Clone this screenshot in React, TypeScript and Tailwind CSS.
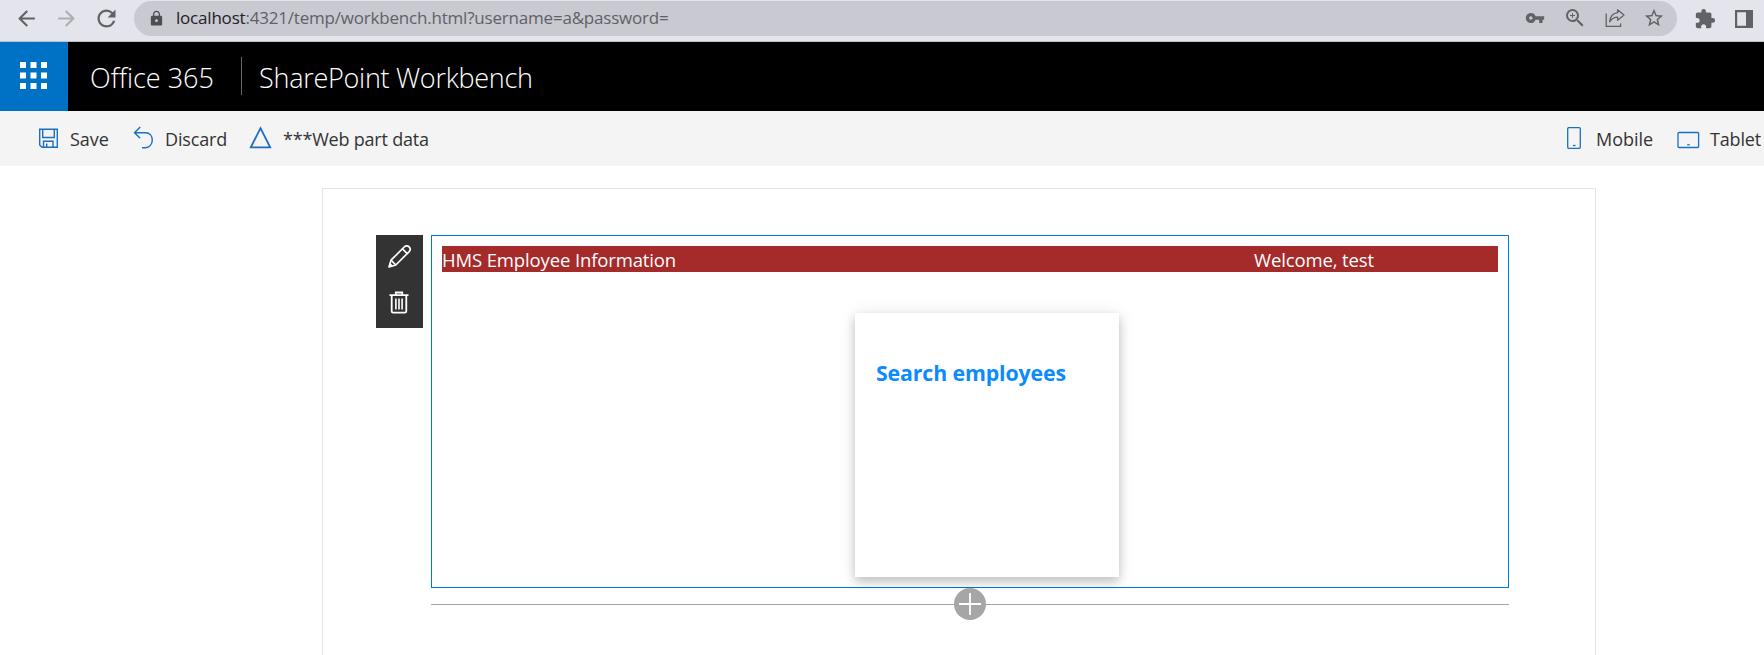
import type { ReactNode } from 'react';
import {
  MdArrowBack,
  MdArrowForward,
  MdExtension,
  MdLock,
  MdRefresh,
  MdStarBorder,
  MdVpnKey,
  MdZoomIn,
} from 'react-icons/md';

function ShareIcon() {
  return (
    <svg width="20" height="20" viewBox="0 0 20 20" fill="none" stroke="currentColor" strokeWidth="1.3">
      <path d="M1.2 5.5V18.3H15.6V15.5" />
      <path d="M12.6 1.8L19 7L12.6 12.2V9.2C9.2 9.2 6.8 10.6 4.6 13.8C5.2 9 8 5.2 12.6 4.7Z" strokeLinejoin="round" />
    </svg>
  );
}

function SidePanelIcon() {
  return (
    <svg width="18" height="18" viewBox="0 0 18 18">
      <path fill="currentColor" fillRule="evenodd" d="M0 0H18V18H0ZM2.2 2.2V15.8H11V2.2Z" />
    </svg>
  );
}

function BrowserBar() {
  return (
    <div className="flex h-[42px] shrink-0 items-start border-b border-[#bfc0c8] bg-[#e4e4ed] pt-px text-[#5f6368]">
      <div className="flex h-[35px] w-[134px] shrink-0 items-center pb-px pl-3.5">
        <MdArrowBack className="size-[25px]" />
        <MdArrowForward className="ml-[15px] size-[25px] text-[#adaeb4]" />
        <MdRefresh className="ml-[14px] size-[27px]" />
      </div>
      <div className="flex h-[35px] w-[1543px] shrink-0 items-center rounded-full bg-[#c9c9d1] pr-3 pb-px">
        <MdLock className="ml-[14px] size-[17px] text-[#4b4e53]" />
        <div className="ml-[11px] flex-1 text-[17px] tracking-[-0.2px] text-[#5f6166]">
          <span className="text-[#202124]">localhost</span>:4321/temp/workbench.html?username=a&amp;password=
        </div>
        <div className="flex items-center">
          <MdVpnKey className="size-5" />
          <MdZoomIn className="ml-[18px] size-6" />
          <div className="ml-[18px]">
            <ShareIcon />
          </div>
          <MdStarBorder className="ml-[18px] size-[22px]" />
        </div>
      </div>
      <div className="flex h-[35px] items-center pl-[17px]">
        <MdExtension className="size-[22px]" />
        <div className="ml-[19px]">
          <SidePanelIcon />
        </div>
      </div>
    </div>
  );
}

function SuiteHeader() {
  return (
    <header className="flex h-[69px] shrink-0 items-center bg-black text-[27px] font-light text-white">
      <div className="flex h-full w-[68px] items-center bg-[#0072c6] pb-[2px] pl-5">
        <svg width="27" height="27" viewBox="0 0 27 27" fill="white">
          {[0, 10.5, 21].map((y) =>
            [0, 10.5, 21].map((x) => <rect key={`${x}-${y}`} x={x} y={y} width="6" height="6" />),
          )}
        </svg>
      </div>
      <div className="w-[173px] pt-[3px] pl-[22px]">Office 365</div>
      <div className="mb-px h-[38px] w-px bg-[#666666]" />
      <div className="pt-[3px] pl-[17px] tracking-[-0.27px]">SharePoint Workbench</div>
    </header>
  );
}

function Command({ icon, label, className }: { icon: ReactNode; label: string; className: string }) {
  return (
    <button className={`flex items-center whitespace-nowrap ${className}`}>
      <span className="text-[#1a6fc4]">{icon}</span>
      <span className="pt-[2px]">{label}</span>
    </button>
  );
}

function CommandBar() {
  return (
    <div className="flex h-[55px] shrink-0 items-center bg-[#f4f4f4] pl-[38px] text-[18px] text-[#333333]">
      <Command
        label="Save"
        className="w-[95px] gap-[11px]"
        icon={
          <svg width="21" height="21" viewBox="0 0 21 21" fill="none" stroke="currentColor" strokeWidth="1.4">
            <path d="M1.7 1.2H19.3V19.3H4L1.7 17Z" />
            <path d="M4.7 1.2V9.5H16.3V1.2M5.5 19.3V13.2H15V19.3M8.7 19.3V15.5" />
          </svg>
        }
      />
      <Command
        label="Discard"
        className="w-[116px] gap-[11px] tracking-[-0.15px]"
        icon={
          <svg width="21" height="23" viewBox="0 0 21 23" fill="none" stroke="currentColor" strokeWidth="1.4" className="-mt-0.5">
            <path d="M7.2 1L1.5 6.8L7.2 12.3M1.7 6.8H12.5C16.8 6.8 19.3 10 19.3 14C19.3 18 16.5 21.7 12.5 21.7H9" />
          </svg>
        }
      />
      <Command
        label="***Web part data"
        className="gap-[11px] tracking-[-0.2px]"
        icon={
          <svg width="23" height="23" viewBox="0 0 23 23" fill="none" stroke="currentColor" strokeWidth="1.8" className="-mt-0.5">
            <path d="M11.5 2.2L21.2 21.3H1.8Z" />
          </svg>
        }
      />
      <div className="flex-1" />
      <Command
        label="Mobile"
        className="w-[111px] gap-[14px]"
        icon={
          <svg width="16" height="24" viewBox="0 0 16 24" fill="none" stroke="currentColor" strokeWidth="1.3" className="-mt-0.5">
            <rect x="1.7" y="1.7" width="12.6" height="20.6" rx="1" />
            <path d="M7 19.5H9.5" />
          </svg>
        }
      />
      <Command
        label="Tablet"
        className="w-[87px] gap-[10px] tracking-[-0.15px]"
        icon={
          <svg width="23" height="18" viewBox="0 0 23 18" fill="none" stroke="currentColor" strokeWidth="1.3" className="mt-[3px]">
            <rect x="1" y="1.5" width="20.6" height="15" rx="1" />
            <path d="M10.2 13.8H12.8" />
          </svg>
        }
      />
    </div>
  );
}

function WebPartToolbar() {
  return (
    <div className="flex h-[93px] w-[47px] flex-col bg-[#333333] pt-[9px] pl-[11px] text-white">
      <svg width="25" height="25" viewBox="0 0 25 25" fill="none" stroke="currentColor" strokeWidth="1.7" strokeLinejoin="round">
        <path d="M2 23L4 16.2L17.2 3C18.8 1.4 20.8 1.5 22.1 2.8C23.5 4.2 23.6 6.2 22 7.8L8.8 21Z" />
        <path d="M15.4 4.8L20.2 9.6M4 16.2L8.8 21M2.8 19.8L5.2 22.2" />
      </svg>
      <svg width="20" height="23" viewBox="0 0 20 23" fill="none" stroke="currentColor" strokeWidth="1.8" className="mt-[22px] ml-[2px]">
        <path d="M0.5 4.2H19.5M6.8 4V1.5H13.2V4M2.7 4.2V20.2Q2.7 21.7 4.2 21.7H15.8Q17.3 21.7 17.3 20.2V4.2" />
        <path d="M6.9 7.5V18.5M10 7.5V18.5M13.1 7.5V18.5" strokeWidth="1.6" />
      </svg>
    </div>
  );
}

function WebPart() {
  return (
    <section className="h-[353px] w-[1078px] border border-[#0078d4] px-2.5 pt-2.5">
      <div className="flex h-[26px] items-center bg-[#a52a2a] text-[18.5px] tracking-[-0.13px] text-white">
        <div className="w-[812px] pt-px">HMS Employee Information</div>
        <div className="pt-px">Welcome, test</div>
      </div>
      <div className="mt-[41px] ml-[413px] h-[264px] w-[264px] bg-white pt-[44px] pl-[21px] shadow-[0_5px_10px_rgba(0,0,0,0.22),0_0_18px_rgba(0,0,0,0.07)]">
        <h2 className="text-[21.3px] leading-8 font-bold tracking-[-0.12px] text-[#0a8bff]">Search employees</h2>
      </div>
    </section>
  );
}

function AddDivider() {
  return (
    <div className="flex h-8 w-[1078px] items-center">
      <div className="h-px flex-1 bg-[#a6a6a6]" />
      <button className="flex size-8 items-center justify-center rounded-full bg-[#a6a6a6]">
        <svg width="22" height="22" viewBox="0 0 22 22" stroke="white" strokeWidth="1.8">
          <path d="M0 11H22M11 0V22" />
        </svg>
      </button>
      <div className="h-px flex-1 bg-[#a6a6a6]" />
    </div>
  );
}

export default function App() {
  return (
    <div className="flex h-[655px] w-[1764px] flex-col overflow-hidden bg-white font-['Open_Sans','Noto_Sans',sans-serif]">
      <BrowserBar />
      <SuiteHeader />
      <CommandBar />
      <main className="mt-[22px] ml-[322px] flex w-[1274px] flex-1 items-start gap-2 border-x border-t border-[#e5e5e5] pt-[46px] pl-[53px]">
        <WebPartToolbar />
        <div>
          <WebPart />
          <AddDivider />
        </div>
      </main>
    </div>
  );
}
